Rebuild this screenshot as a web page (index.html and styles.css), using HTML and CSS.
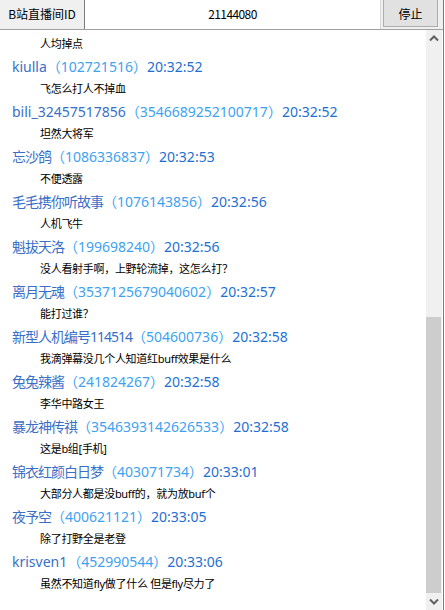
FILE: index.html
```html
<!DOCTYPE html>
<html lang="zh-CN">
<head>
<meta charset="utf-8">
<title>B站直播间弹幕</title>
<link rel="stylesheet" href="styles.css">
</head>
<body>
<div class="app">
  <div class="topbar">
    <div class="label">B站直播间ID</div>
    <div class="input">21144080</div>
    <div class="btn">停止</div>
  </div>
  <div class="listwrap">
    <div class="messages">
      <div class="msg">人均掉点</div>
      <div class="head"><span class="name">kiulla</span><span class="uid">（102721516）</span><span class="time">20:32:52</span></div>
      <div class="msg">飞怎么打人不掉血</div>
      <div class="head"><span class="name">bili_32457517856</span><span class="uid">（3546689252100717）</span><span class="time">20:32:52</span></div>
      <div class="msg">坦然大将军</div>
      <div class="head"><span class="name cn">忘沙鸽</span><span class="uid">（1086336837）</span><span class="time">20:32:53</span></div>
      <div class="msg">不便透露</div>
      <div class="head"><span class="name cn">毛毛携你听故事</span><span class="uid">（1076143856）</span><span class="time">20:32:56</span></div>
      <div class="msg">人机飞牛</div>
      <div class="head"><span class="name cn">魁拔天洛</span><span class="uid">（199698240）</span><span class="time">20:32:56</span></div>
      <div class="msg">没人看射手啊，上野轮流掉，这怎么打？</div>
      <div class="head"><span class="name cn">离月无魂</span><span class="uid">（3537125679040602）</span><span class="time">20:32:57</span></div>
      <div class="msg">能打过谁？</div>
      <div class="head"><span class="name cn">新型人机编号114514</span><span class="uid">（504600736）</span><span class="time">20:32:58</span></div>
      <div class="msg">我滴弹幕没几个人知道红buff效果是什么</div>
      <div class="head"><span class="name cn">兔兔辣酱</span><span class="uid">（241824267）</span><span class="time">20:32:58</span></div>
      <div class="msg">李华中路女王</div>
      <div class="head"><span class="name cn">暴龙神传祺</span><span class="uid">（3546393142626533）</span><span class="time">20:32:58</span></div>
      <div class="msg">这是b组[手机]</div>
      <div class="head"><span class="name cn">锦衣红颜白日梦</span><span class="uid">（403071734）</span><span class="time">20:33:01</span></div>
      <div class="msg">大部分人都是没buff的，就为放buf个</div>
      <div class="head"><span class="name cn">夜予空</span><span class="uid">（400621121）</span><span class="time">20:33:05</span></div>
      <div class="msg">除了打野全是老登</div>
      <div class="head"><span class="name">krisven1</span><span class="uid">（452990544）</span><span class="time">20:33:06</span></div>
      <div class="msg">虽然不知道fly做了什么 但是fly尽力了</div>
    </div>
    <div class="scrollbar">
      <div class="arrow">
        <svg width="16" height="17" viewBox="0 0 16 17"><polyline points="4,10.5 8,6.5 12,10.5" fill="none" stroke="#606060" stroke-width="2"/></svg>
      </div>
      <div class="track"><div class="thumb"></div></div>
      <div class="arrow">
        <svg width="16" height="17" viewBox="0 0 16 17"><polyline points="4,6.5 8,10.5 12,6.5" fill="none" stroke="#606060" stroke-width="2"/></svg>
      </div>
    </div>
  </div>
</div>
</body>
</html>
```
FILE: styles.css
```css
html, body {
  margin: 0;
  padding: 0;
  background: #ffffff;
}
.app {
  width: 443px;
  height: 610px;
  border-right: 1px solid #7a7a7a;
  display: flex;
  flex-direction: column;
  overflow: hidden;
  font-family: "Noto Sans", "Noto Sans CJK SC", sans-serif;
}
.topbar {
  height: 29px;
  flex: none;
  display: flex;
  background: #f0f0f0;
  border-bottom: 1px solid #a0a0a0;
}
.label {
  width: 84px;
  display: flex;
  align-items: center;
  justify-content: center;
  font-family: "Noto Sans CJK SC", sans-serif;
  font-size: 12px;
  color: #000;
  padding-bottom: 2px;
}
.input {
  width: 295px;
  background: #fff;
  border-left: 1px solid #7a7a7a;
  border-right: 1px solid #d6d6d6;
  display: flex;
  align-items: center;
  justify-content: center;
  font-family: "Noto Sans CJK SC", sans-serif;
  font-size: 12px;
  letter-spacing: -0.6px;
  color: #000;
  padding-bottom: 2px;
}
.btn {
  width: 53px;
  height: 26px;
  margin-left: 2px;
  background: #e1e1e1;
  border: 1px solid #adadad;
  border-top: 0;
  display: flex;
  align-items: center;
  justify-content: center;
  font-family: "Noto Sans CJK SC", sans-serif;
  font-size: 12px;
  color: #000;
}
.listwrap {
  flex: 1;
  display: flex;
  min-height: 0;
}
.messages {
  flex: 1;
  overflow: hidden;
  padding: 3px 0 0 12px;
}
.msg {
  height: 22px;
  line-height: 22px;
  padding-left: 28px;
  font-size: 11px;
  letter-spacing: -0.3px;
  color: #000;
  white-space: nowrap;
}
.head {
  height: 23px;
  line-height: 23px;
  font-size: 14px;
  white-space: nowrap;
}
.name {
  color: #3a6fc8;
}
.name.cn {
  letter-spacing: -1px;
}
.uid {
  color: #3da2f2;
}
.time {
  color: #1e6fd4;
}
.scrollbar {
  width: 16px;
  margin-right: 1px;
  background: #f0f0f0;
  display: flex;
  flex-direction: column;
}
.arrow {
  height: 17px;
  flex: none;
}
.arrow svg {
  display: block;
}
.track {
  flex: 1;
  display: flex;
  flex-direction: column;
  justify-content: flex-end;
}
.thumb {
  height: 276px;
  margin-right: 1px;
  background: #cdcdcd;
}
```
